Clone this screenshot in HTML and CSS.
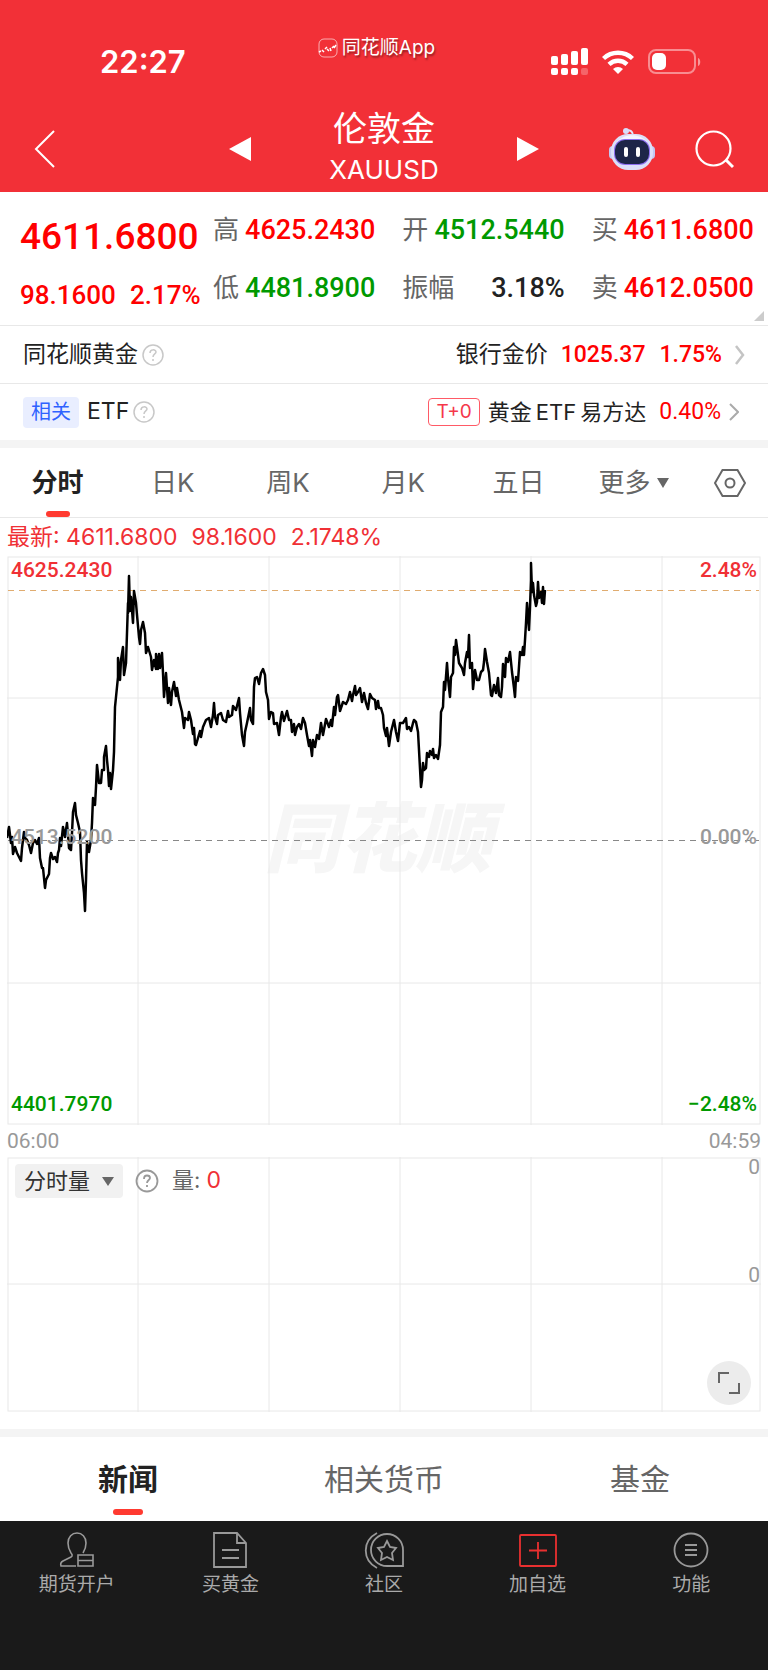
FILE: index.html
```html
<!DOCTYPE html>
<html lang="zh-CN">
<head>
  <meta charset="UTF-8" />
  <meta name="viewport" content="width=device-width, initial-scale=1" />
  <title>伦敦金 XAUUSD</title>
  <link rel="stylesheet" href="styles.css">
</head>
<body>
  <header class="header">
    <div class="status-bar">
      <span class="time">22:27</span>
      <span class="app-name">
        <svg width="20" height="20" viewBox="0 0 20 20" fill="none" stroke="#fff">
          <rect x="1" y="1" width="18" height="18" rx="5" stroke-opacity=".6" />
          <path d="M1 14l2-1M4 12l2 2M7 11l2-2M9 11l2 2M12 10l1 3M14 10l2-2M16 10l2-3" stroke-width="1.500" />
        </svg>
        同花顺App
      </span>
      <span class="status-icons">
        <svg width="37" height="28" viewBox="0 0 37 28" fill="#fff">
          <rect x="0" y="8" width="7" height="9" rx="2" />
          <rect x="10" y="6" width="7" height="11" rx="2" />
          <rect x="20" y="3" width="7" height="14" rx="2" />
          <rect x="30" y="0" width="7" height="17" rx="2" />
          <rect x="0" y="20" width="7" height="7" rx="2" />
          <rect x="10" y="20" width="7" height="7" rx="2" />
          <rect x="20" y="20" width="7" height="7" rx="2" />
          <rect x="30" y="20" width="7" height="7" rx="2" fill-opacity=".25" />
        </svg>
        <svg width="32" height="24" viewBox="0 0 32 24" fill="none" stroke="#fff" stroke-width="4.400">
          <path d="M1.500 8.500a21 21 0 0 1 29 0" />
          <path d="M7 14.300a13 13 0 0 1 18 0" />
          <path d="M11 19a7.500 7.500 0 0 1 10 0l-5 5z" fill="#fff" stroke="none" />
        </svg>
        <svg width="53" height="26" viewBox="0 0 53 26">
          <rect x="1" y="1" width="46" height="23" rx="7" fill="none" stroke="#fff" stroke-opacity=".45" stroke-width="2" />
          <rect x="4" y="4" width="14" height="17" rx="5" fill="#fff" />
          <path d="M50 9v8c3-1 3-7 0-8z" fill="#fff" fill-opacity=".5" />
        </svg>
      </span>
    </div>

    <div class="title-bar">
      <button class="icon-button back" aria-label="返回">
        <svg width="22" height="38" viewBox="0 0 22 38" fill="none" stroke="#fff" stroke-width="2"><path d="M20 1L2 19l18 18" /></svg>
      </button>
      <div class="switcher">
        <button class="icon-button" aria-label="上一个">
          <svg width="22" height="24" viewBox="0 0 22 24" fill="#fff"><path d="M22 0v24L0 12z" /></svg>
        </button>
        <div class="title">
          <h1>伦敦金</h1>
          <p>XAUUSD</p>
        </div>
        <button class="icon-button" aria-label="下一个">
          <svg width="22" height="24" viewBox="0 0 22 24" fill="#fff"><path d="M0 0v24l22-12z" /></svg>
        </button>
      </div>
      <div class="actions">
        <button class="icon-button" aria-label="智能助手">
          <svg width="46" height="42" viewBox="0 0 46 42">
            <path d="M17 2.500c4-1 7 1 7 5" fill="none" stroke="#e3e4fb" stroke-width="2" />
            <circle cx="17" cy="3" r="3" fill="#d9dcfa" />
            <rect x="0" y="18" width="8" height="13" rx="4" fill="#c3c8f2" />
            <rect x="38" y="18" width="8" height="13" rx="4" fill="#c3c8f2" />
            <rect x="2" y="6" width="42" height="36" rx="17" fill="#dcdff8" />
            <path d="M8 14c7-9 23-9 30 0z" fill="#f5f5ff" />
            <rect x="5" y="11" width="36" height="26" rx="11" fill="#8d6ff0" />
            <rect x="6" y="12" width="34" height="24" rx="10" fill="#1d2548" />
            <rect x="15" y="19" width="4" height="10" rx="2" fill="#fff" />
            <rect x="27" y="19" width="4" height="10" rx="2" fill="#fff" />
          </svg>
        </button>
        <button class="icon-button" aria-label="搜索">
          <svg width="39" height="39" viewBox="0 0 39 39" fill="none" stroke="#fff" stroke-width="2.200"><circle cx="18.500" cy="18.500" r="17" /><path d="M31 30l7 7" stroke-width="3" /></svg>
        </button>
      </div>
    </div>
  </header>

  <main>
    <!-- Cotización -->
    <section class="quote">
      <div class="price">
        <strong>4611.6800</strong>
        <p><span>98.1600</span><span>2.17%</span></p>
      </div>
      <dl class="stats">
        <div><dt>高</dt><dd class="up">4625.2430</dd></div>
        <div><dt>开</dt><dd class="down">4512.5440</dd></div>
        <div><dt>买</dt><dd class="up">4611.6800</dd></div>
        <div><dt>低</dt><dd class="down">4481.8900</dd></div>
        <div><dt>振幅</dt><dd>3.18%</dd></div>
        <div><dt>卖</dt><dd class="up">4612.0500</dd></div>
      </dl>
      <span class="corner"></span>
    </section>

    <section class="related">
      <div class="related-row">
        <span class="related-name">同花顺黄金</span>
        <button class="icon-button help" aria-label="说明">
          <svg width="22" height="22" viewBox="0 0 22 22" fill="none" stroke="#c8c8c8" stroke-width="1.500"><circle cx="11" cy="11" r="10" /><path d="M8 9c0-4 6-4 6-1 0 2-3 2-3 5M11 15v2" /></svg>
        </button>
        <a class="related-link" href="#">
          <span class="related-name">银行金价</span>
          <span class="figures up"><b>1025.37</b><b>1.75%</b></span>
          <svg class="arrow-wide" width="10" height="20" viewBox="0 0 10 20" fill="none" stroke="#c4c4c4" stroke-width="2.500"><path d="M1 1l7 9-7 9" /></svg>
        </a>
      </div>
      <div class="related-row">
        <span class="tag">相关</span>
        <span class="related-name">ETF</span>
        <button class="icon-button help" aria-label="说明">
          <svg width="22" height="22" viewBox="0 0 22 22" fill="none" stroke="#c8c8c8" stroke-width="1.500"><circle cx="11" cy="11" r="10" /><path d="M8 9c0-4 6-4 6-1 0 2-3 2-3 5M11 15v2" /></svg>
        </button>
        <a class="related-link" href="#">
          <span class="badge">T+0</span>
          <span>黄金<span class="latin">ETF</span>易方达</span>
          <span class="figures up"><b class="regular">0.40%</b></span>
          <svg class="arrow" width="10" height="18" viewBox="0 0 10 18" fill="none" stroke="#aaa" stroke-width="2"><path d="M1 1l8 8-8 8" /></svg>
        </a>
      </div>
    </section>

    <nav class="periods">
      <button class="period active">分时</button>
      <button class="period">日K</button>
      <button class="period">周K</button>
      <button class="period">月K</button>
      <button class="period">五日</button>
      <button class="period">更多
        <svg width="12" height="10" viewBox="0 0 12 10" fill="#666"><path d="M0 0h12L6 10z" /></svg>
      </button>
      <button class="icon-button settings" aria-label="设置">
        <svg width="32" height="30" viewBox="0 0 32 30" fill="none" stroke="#666" stroke-width="2"><path d="M8.500 2h15L31 15l-7.500 13h-15L1 15z" /><circle cx="16" cy="15" r="4.500" /></svg>
      </button>
    </nav>

    <section class="charts">
      <p class="latest"><span>最新: 4611.6800</span><span>98.1600</span><span>2.1748%</span></p>

      <div class="price-chart">
        <svg class="plot" viewBox="0 0 754 569">
          <text class="watermark" x="257" y="310">同花顺</text>
          <path class="grid" d="M131 0v569M262 0v569M393 0v569M524 0v569M655 0v569M0 142h754M0 427h754" />
          <rect class="grid" x="1" y="1" width="752" height="567" />
          <path class="line-last" d="M1 34.500h751" />
          <path class="line-base" d="M1 284.500h751" />
          <polyline class="series" points="0,282 2,271 4,287 5,281 6,298 8,291 10,297 14,305 15,292 17,276 18,282 20,284 22,289 24,297 26,287 28,284 30,288 32,282 33,302 35,312 36,312 38,332 39,324 42,318 43,302 44,297 46,303 48,301 50,306 51,297 52,294 53,282 54,290 56,271 58,281 60,267 61,279 62,292 64,294 65,277 66,256 68,247 69,259 71,267 73,276 74,304 75,317 77,337 78,355 79,324 80,286 81,292 82,296 84,284 85,267 86,242 88,249 89,231 90,209 92,227 94,227 95,214 97,214 97,201 99,190 100,204 101,214 102,230 103,217 104,233 106,214 107,196 108,151 110,131 111,121 111,102 113,124 114,104 116,91 117,119 119,107 120,77 121,47 121,57 122,20 123,55 124,41 126,67 127,35 129,47 130,59 132,81 133,88 134,74 136,66 138,77 139,97 141,91 144,101 145,114 147,104 149,113 149,98 151,113 152,98 153,112 155,97 156,117 157,141 159,117 161,147 162,132 164,149 165,136 167,126 169,140 170,132 172,144 175,156 177,172 178,162 181,164 182,156 184,164 186,178 187,172 188,188 189,189 191,182 193,175 194,181 196,171 199,164 202,162 204,171 206,159 207,147 208,161 210,168 211,159 214,157 216,164 219,166 221,155 222,161 225,159 226,150 229,154 232,142 233,157 235,179 237,190 238,176 240,167 242,157 243,152 244,164 246,168 247,131 248,122 250,121 252,128 254,117 256,113 258,119 259,136 261,144 262,163 264,156 266,157 267,168 270,167 272,179 274,161 275,156 277,165 280,155 282,164 284,164 285,176 287,168 288,179 290,171 292,168 294,173 296,162 298,167 300,179 302,190 303,184 305,200 306,184 308,191 310,179 312,183 314,167 316,179 319,163 322,171 324,164 325,170 327,151 328,159 330,141 331,139 333,155 336,146 339,148 341,144 343,136 345,145 346,139 348,130 349,139 351,136 353,132 355,146 357,137 359,147 361,153 363,138 365,142 368,144 369,153 371,145 372,152 374,152 376,159 377,172 379,180 380,172 382,190 384,176 387,164 389,176 391,185 393,167 396,167 399,162 400,173 402,171 404,175 406,167 407,164 409,166 411,176 412,194 414,231 415,224 416,207 417,214 419,212 420,197 422,201 423,195 425,199 426,193 427,202 429,199 431,203 433,189 434,156 436,151 437,126 438,134 440,107 441,122 443,141 444,121 446,117 447,91 448,99 449,84 451,99 452,107 455,112 457,119 458,107 460,96 461,101 462,79 463,112 465,107 466,133 468,114 470,124 472,124 474,116 476,114 477,106 478,93 480,106 482,117 484,139 485,140 487,129 489,137 491,122 492,139 494,141 495,131 496,108 498,121 499,102 501,106 503,96 505,116 507,132 508,141 509,121 511,125 513,96 515,99 516,91 517,99 518,84 519,67 520,47 522,74 523,51 524,24 524,7 525,36 526,27 527,39 529,50 530,46 531,26 532,42 534,36 535,47 536,31 537,48 538,34" />
        </svg>
        <div class="scale">
          <div class="up"><span>4625.2430</span><span>2.48%</span></div>
          <div><span>4513.5200</span><span>0.00%</span></div>
          <div class="down"><span>4401.7970</span><span>−2.48%</span></div>
        </div>
      </div>

      <div class="hours"><span>06:00</span><span>04:59</span></div>

      <div class="volume-chart">
        <svg class="plot" viewBox="0 0 754 255">
          <path class="grid" d="M131 0v255M262 0v255M393 0v255M524 0v255M655 0v255M0 127h754" />
          <rect class="grid" x="1" y="1" width="752" height="253" />
        </svg>
        <div class="volume-tools">
          <label class="indicator">
            <select aria-label="指标"><option>分时量</option></select>
            <svg width="12" height="9" viewBox="0 0 12 9" fill="#666"><path d="M0 0h12L6 9z" /></svg>
          </label>
          <button class="icon-button" aria-label="说明">
            <svg width="24" height="24" viewBox="0 0 24 24" fill="none" stroke="#999" stroke-width="1.800"><circle cx="12" cy="12" r="10.500" /><path d="M9 10c0-5 6-4 6-1 0 2-3 2-3 5M12 16v2" /></svg>
          </button>
          <span class="volume-value">量: <em>0</em></span>
        </div>
        <div class="volume-scale"><span>0</span><span>0</span></div>
        <button class="expand" aria-label="全屏">
          <svg width="24" height="24" viewBox="0 0 24 24" fill="none" stroke="#666" stroke-width="2"><path d="M2 12V2h10M22 12v10H12" /></svg>
        </button>
      </div>
    </section>

    <nav class="sections">
      <button class="section-tab active">新闻</button>
      <button class="section-tab">相关货币</button>
      <button class="section-tab">基金</button>
    </nav>
  </main>

  <footer class="bottom-nav">
    <a href="#">
      <svg width="38" height="38" viewBox="0 0 38 38" fill="none" stroke="#999" stroke-width="1.600"><path d="M18 35H3c-1-3 0-4 2-5l8-4c2-1 1-3 0-4-2-3-3-6-3-10C10 6 14 2 19 2s9 4 9 10c0 4-1 7-3 10" /><path d="M20 24h15v11H20zM20 29.500h15" /></svg>
      期货开户
    </a>
    <a href="#">
      <svg width="38" height="38" viewBox="0 0 38 38" fill="none" stroke="#999" stroke-width="1.800"><path d="M3 2h23l9 10v24H3zM26 2v10h9M11 19h17M11 27h17" /></svg>
      买黄金
    </a>
    <a href="#">
      <svg width="40" height="38" viewBox="0 0 40 38" fill="none" stroke="#999" stroke-width="1.800"><path d="M39 35H23a16 16 0 1 1 16-16zM13 2C-2 10-2 29 13 37" /><path d="M23 10l3 6 6 1-4 5 1 7-6-3-6 3 1-7-4-5 6-1z" /></svg>
      社区
    </a>
    <a href="#">
      <svg width="38" height="38" viewBox="0 0 38 38" fill="none" stroke="#e93030" stroke-width="1.800"><rect x="1" y="4" width="36" height="31" rx="1" /><path d="M10 19.500h18M19 11v17" /></svg>
      加自选
    </a>
    <a href="#">
      <svg width="38" height="38" viewBox="0 0 38 38" fill="none" stroke="#999" stroke-width="1.800"><circle cx="19" cy="19" r="16.500" /><path d="M13 14h12M13 19h12M13 24h12" /></svg>
      功能
    </a>
  </footer>
</body>
</html>
```

FILE: styles.css
```css
* {
  box-sizing: border-box;
}

body {
  margin: 0;
  min-height: 100vh;
  display: flex;
  flex-direction: column;
  font-family: Inter, 'Noto Sans CJK SC', sans-serif;
  font-size: 22px;
  line-height: 1.2;
  color: #222;
  background: #fff;
}

h1, p, dl, dd {
  margin: 0;
}

svg {
  display: block;
  flex-shrink: 0;
}

a {
  color: inherit;
  text-decoration: none;
}

button {
  padding: 0;
  border: 0;
  background: none;
  font: inherit;
  color: inherit;
}

.icon-button {
  display: flex;
  align-items: center;
  justify-content: center;
}

.up {
  color: #f00;
}

.down {
  color: #090;
}

/* Cabecera */
.header {
  background: #f23037;
  color: #fff;
}

.status-bar {
  display: grid;
  grid-template-columns: 1fr auto 1fr;
  align-items: center;
  height: 100px;
  padding: 24px 67px 0 100px;
}

.time {
  font-size: 31px;
  font-weight: 600;
}

.app-name {
  display: flex;
  align-items: center;
  gap: 4px;
  margin-right: 48px;
  padding-bottom: 28px;
  font-size: 19px;
  text-shadow: 1px 2px 2px rgba(0, 0, 0, 0.4);
}

.status-icons {
  display: flex;
  align-items: center;
  justify-content: flex-end;
  gap: 14px;
}

.title-bar {
  display: grid;
  grid-template-columns: 1fr 310px 1fr;
  align-items: center;
  height: 92px;
  padding: 6px 34px 0;
}

.back {
  justify-self: start;
}

.switcher {
  display: flex;
  align-items: center;
  justify-content: space-between;
}

.title {
  text-align: center;
}

.title h1 {
  font-size: 34px;
  font-weight: 400;
  line-height: 42px;
}

.title p {
  font-size: 26px;
  line-height: 40px;
}

.actions {
  display: flex;
  align-items: center;
  justify-content: flex-end;
  gap: 40px;
}

/* Precio y datos del día */
.quote {
  position: relative;
  display: grid;
  grid-template-columns: 193px 1fr;
  padding: 9px 14px 8px 20px;
  border-bottom: 1px solid #e8e8e8;
  font-family: Roboto, 'Noto Sans CJK SC', sans-serif;
  line-height: 58px;
}

.price {
  padding-top: 7px;
  height: 116px;
  color: #f00;
  font-weight: 500;
}

.price strong {
  display: block;
  font-size: 37px;
  font-weight: 500;
}

.price p {
  display: flex;
  gap: 14px;
  font-size: 26px;
}

.stats {
  display: grid;
  grid-template-columns: repeat(3, 1fr);
  column-gap: 27px;
}

.stats div {
  display: flex;
  justify-content: space-between;
  height: 58px;
}

.stats dt {
  font-size: 26px;
  color: #666;
}

.stats dd {
  font-size: 27px;
  font-weight: 500;
}

.corner {
  position: absolute;
  right: 4px;
  bottom: 4px;
  border-left: 10px solid transparent;
  border-bottom: 10px solid #ccc;
}

/* Productos relacionados */
.related {
  border-bottom: 8px solid #f4f4f4;
}

.related-row {
  display: flex;
  align-items: center;
  height: 57px;
  padding: 0 23px;
}

.related-row + .related-row {
  border-top: 1px solid #e8e8e8;
}

.related-name {
  font-size: 23px;
}

.help {
  margin-left: 4px;
}

.related-link {
  display: flex;
  align-items: center;
  margin-left: auto;
}

.figures {
  display: flex;
  gap: 14px;
  margin-left: 13px;
  font-family: Roboto, sans-serif;
  font-size: 23px;
}

.figures b {
  font-weight: 500;
}

.figures .regular {
  font-weight: 400;
}

.arrow-wide {
  margin-left: 13px;
}

.arrow {
  margin: 0 6px 0 8px;
}

.tag {
  margin-right: 8px;
  padding: 0 8px;
  border-radius: 4px;
  background: #e9eeff;
  color: #2f62ff;
  font-size: 20px;
  line-height: 31px;
}

.badge {
  margin-right: 8px;
  padding: 0 7px;
  border: 1px solid #ff5a66;
  border-radius: 4px;
  color: #f5384a;
  font-size: 19px;
  line-height: 26px;
}

.latin {
  margin: 0 4px;
}

/* Pestañas de periodo */
.periods {
  display: flex;
  height: 70px;
  border-bottom: 1px solid #e8e8e8;
  font-size: 26px;
  color: #666;
}

.period {
  position: relative;
  display: flex;
  flex: 3;
  align-items: center;
  justify-content: center;
  gap: 6px;
}

.settings {
  flex: 2;
}

.active {
  position: relative;
  font-weight: 700;
  color: #222;
}

.active::after {
  content: '';
  position: absolute;
  bottom: 0;
  left: 50%;
  width: 24px;
  height: 6px;
  border-radius: 3px;
  background: #ff3a30;
  transform: translateX(-50%);
}

/* Gráficos */
.charts {
  padding: 0 7px 17px;
  border-bottom: 8px solid #f4f4f4;
}

.latest {
  display: flex;
  gap: 14px;
  font-size: 23px;
  line-height: 38px;
  color: #f03035;
}

.plot {
  width: 100%;
  height: auto;
}

.grid {
  fill: none;
  stroke: #e8e8e8;
}

.line-last,
.line-base {
  fill: none;
  stroke: #e0ac70;
  stroke-dasharray: 6 5;
}

.line-base {
  stroke: #888;
}

.series {
  fill: none;
  stroke: #000;
  stroke-width: 2.5;
  stroke-linejoin: round;
}

.watermark {
  font-family: 'Noto Sans CJK SC', sans-serif;
  font-size: 76px;
  font-weight: 900;
  font-style: italic;
  fill: #f6f6f6;
}

.price-chart,
.volume-chart {
  position: relative;
}

.scale {
  position: absolute;
  inset: 0;
  display: flex;
  flex-direction: column;
  justify-content: space-between;
  padding: 0 4px 7px;
  font-family: Roboto, sans-serif;
  font-size: 21px;
  font-weight: 500;
  line-height: 28px;
  color: #999;
}

.scale div {
  display: flex;
  justify-content: space-between;
}

.scale .up {
  color: #f03035;
}

.scale .down {
  color: #090;
}

.hours {
  display: flex;
  justify-content: space-between;
  font-family: Roboto, sans-serif;
  font-size: 21px;
  line-height: 32px;
  color: #999;
}

.volume-tools {
  position: absolute;
  top: 7px;
  left: 8px;
  display: flex;
  align-items: center;
  color: #666;
}

.indicator {
  display: flex;
  align-items: center;
  gap: 11px;
  height: 34px;
  margin-right: 12px;
  padding: 0 9px;
  border-radius: 4px;
  background: #f1f1f1;
}

.indicator select {
  appearance: none;
  padding: 0;
  border: 0;
  background: none;
  font: inherit;
  color: #333;
}

.volume-value {
  margin-left: 13px;
}

.volume-value em {
  font-size: 23px;
  font-style: normal;
  color: #f03035;
}

.volume-scale {
  position: absolute;
  top: 0;
  right: 1px;
  height: 50%;
  display: flex;
  flex-direction: column;
  justify-content: space-between;
  font-family: Roboto, sans-serif;
  font-size: 21px;
  line-height: 20px;
  color: #999;
}

.expand {
  position: absolute;
  right: 10px;
  bottom: 7px;
  display: flex;
  align-items: center;
  justify-content: center;
  width: 44px;
  height: 44px;
  border-radius: 50%;
  background: #ececec;
}

/* Secciones inferiores */
.sections {
  display: flex;
  height: 84px;
  padding-bottom: 6px;
  font-size: 30px;
  color: #666;
}

.section-tab {
  flex: 1;
  padding-top: 6px;
}

.section-tab.active::after {
  width: 30px;
}

.bottom-nav {
  display: flex;
  flex: 1;
  align-items: flex-start;
  padding: 10px 0 70px;
  background: #1a1a1a;
  color: #aaa;
  font-size: 19px;
  line-height: 28px;
}

.bottom-nav a {
  display: flex;
  flex: 1;
  flex-direction: column;
  align-items: center;
  gap: 2px;
}
```
